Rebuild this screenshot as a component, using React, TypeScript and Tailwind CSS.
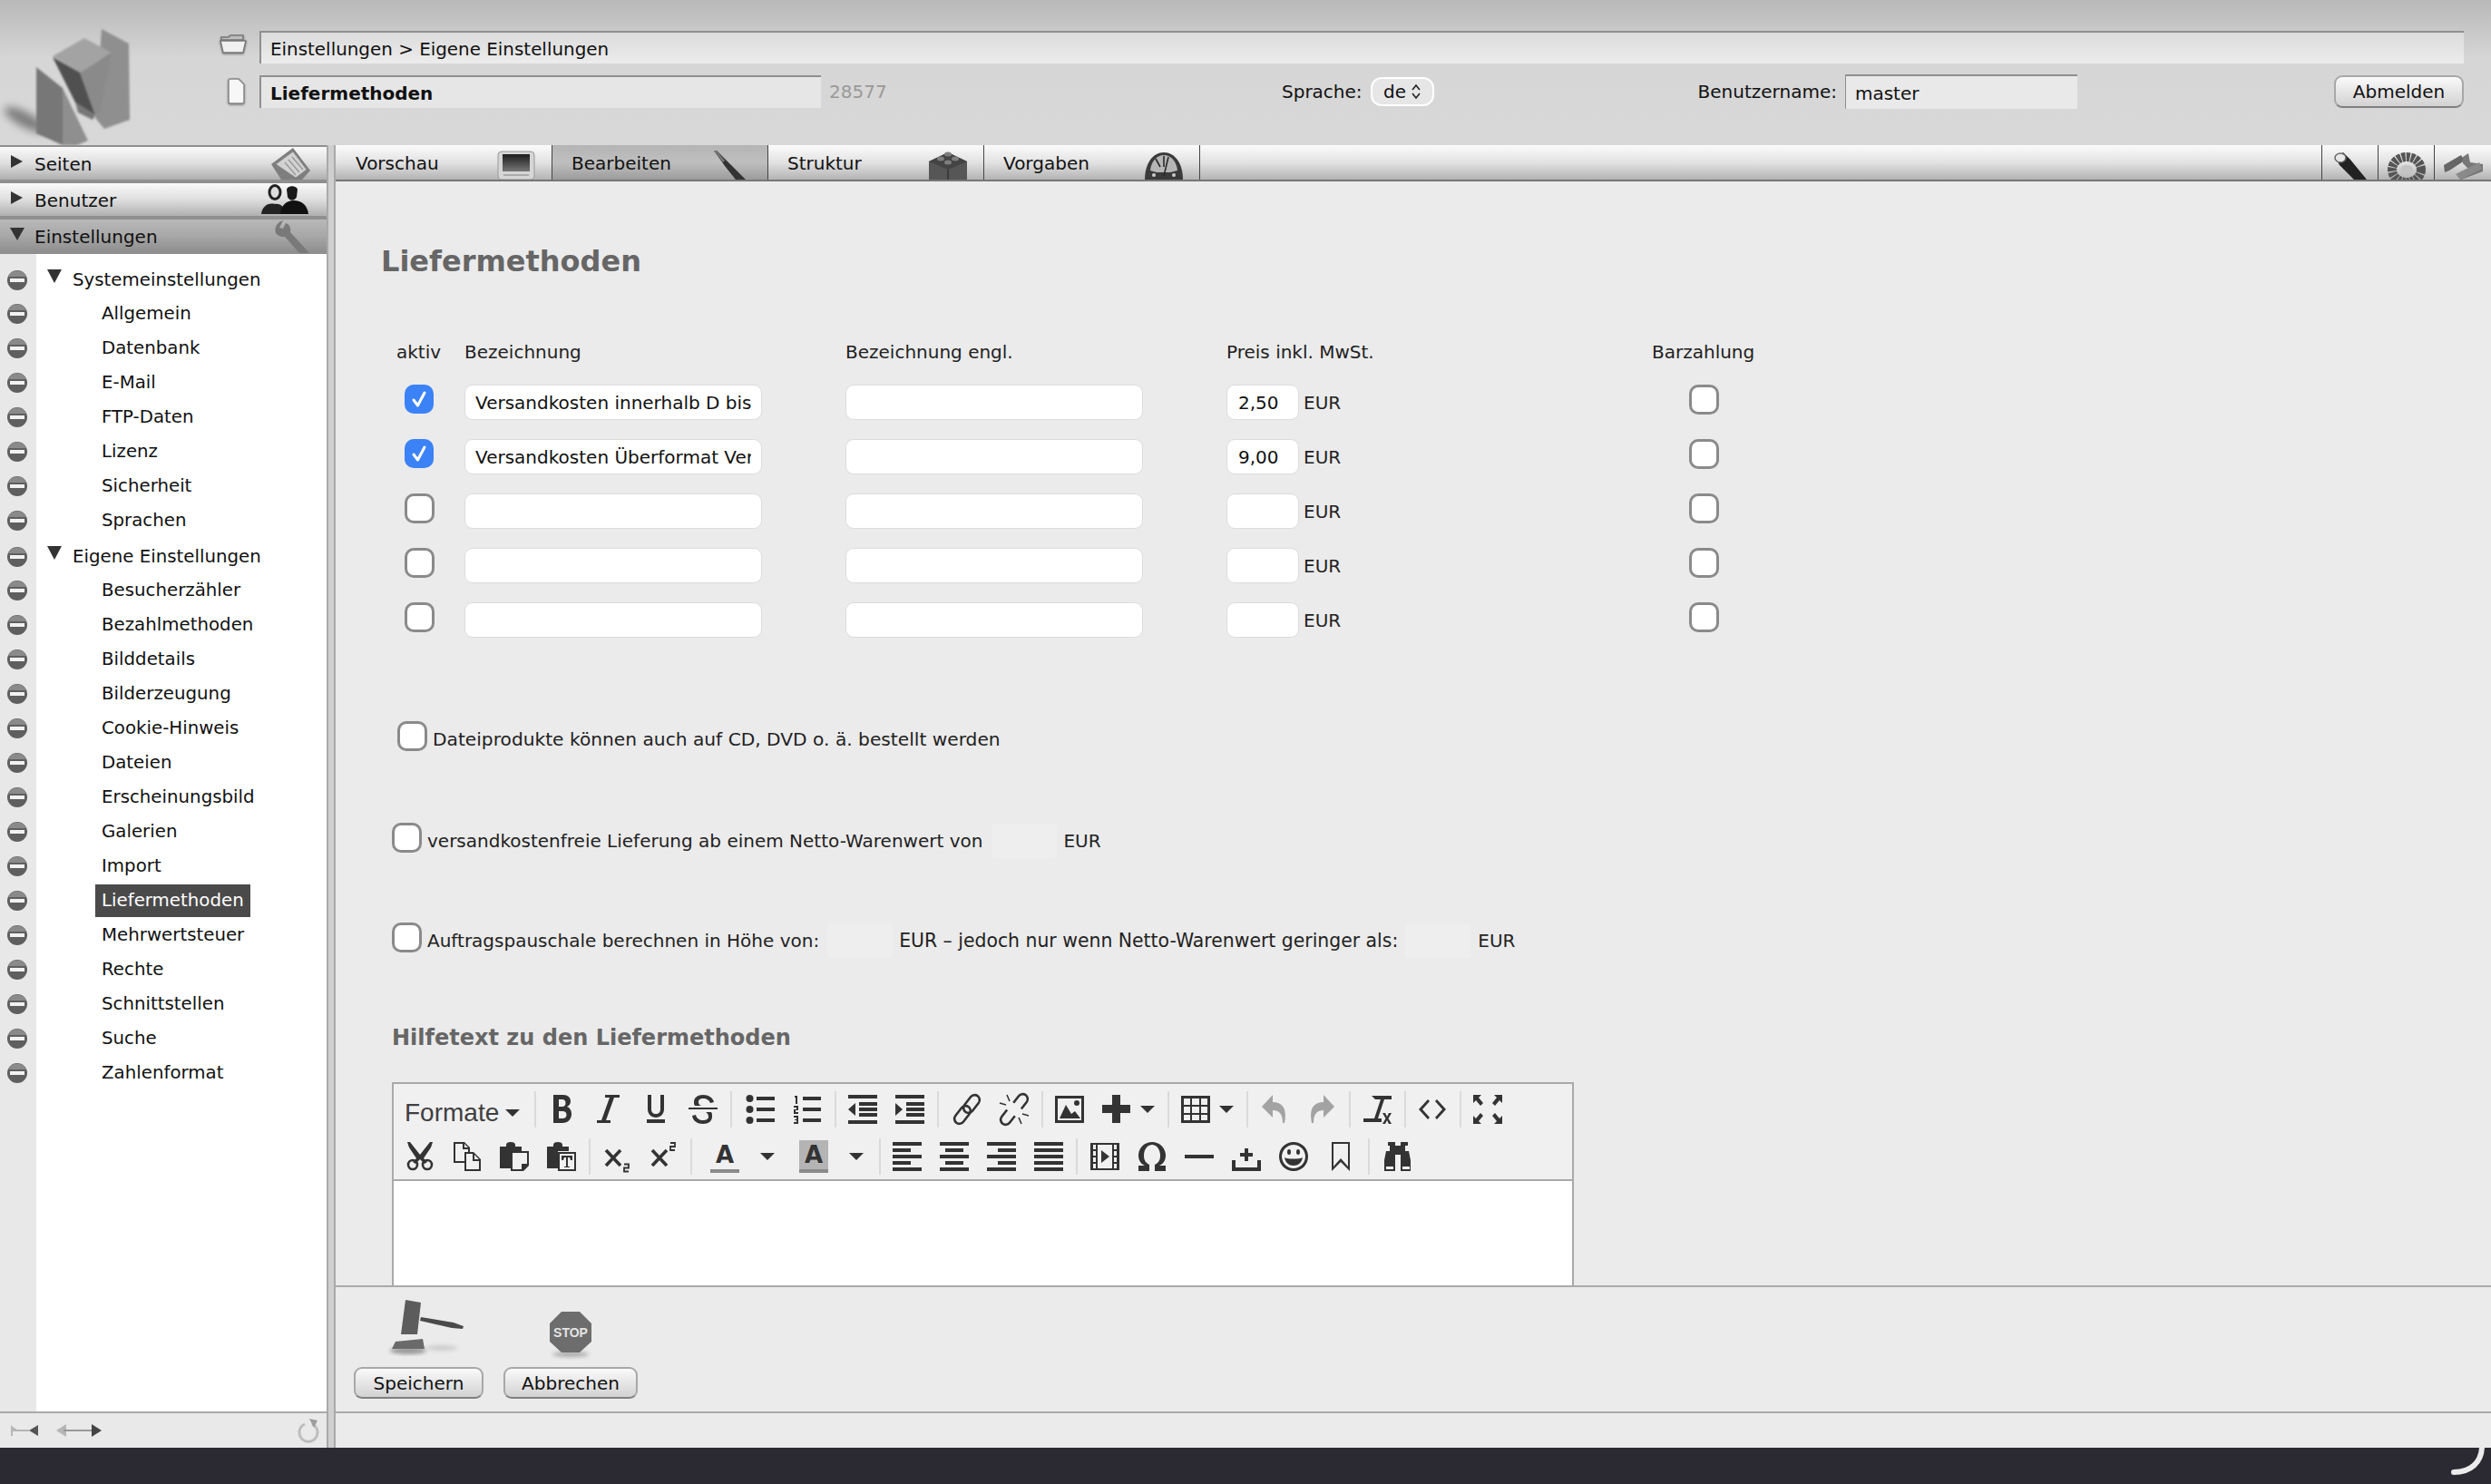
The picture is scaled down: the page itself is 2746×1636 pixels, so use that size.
import React from "react";

const tree = [
  { title: "Systemeinstellungen", items: ["Allgemein", "Datenbank", "E-Mail", "FTP-Daten", "Lizenz", "Sicherheit", "Sprachen"] },
  { title: "Eigene Einstellungen", items: ["Besucherzähler", "Bezahlmethoden", "Bilddetails", "Bilderzeugung", "Cookie-Hinweis", "Dateien", "Erscheinungsbild", "Galerien", "Import", "Liefermethoden", "Mehrwertsteuer", "Rechte", "Schnittstellen", "Suche", "Zahlenformat"] },
];

const rows = [
  { on: true, name: "Versandkosten innerhalb D bis 500g", price: "2,50" },
  { on: true, name: "Versandkosten Überformat Versand", price: "9,00" },
  { on: false, name: "", price: "" },
  { on: false, name: "", price: "" },
  { on: false, name: "", price: "" },
];

function Check({ on = false }: { on?: boolean }) {
  if (on) {
    return (
      <span className="flex h-[32px] w-[32px] shrink-0 items-center justify-center rounded-[10px] bg-[#3b82f6]">
        <svg viewBox="0 0 32 32" className="h-[32px] w-[32px]" fill="none" stroke="white" strokeWidth="3" strokeLinecap="round" strokeLinejoin="round">
          <path d="M10 17l4.5 6L22 9" />
        </svg>
      </span>
    );
  }
  return <span className="block h-[33px] w-[33px] shrink-0 rounded-[10px] border-[3px] border-[#8a8a8a] bg-white" />;
}

function Minus() {
  return (
    <svg viewBox="0 0 24 24" className="h-[24px] w-[24px]" style={{ filter: "blur(0.4px)" }}>
      <circle cx="12" cy="12" r="11" fill="#5f5f5f" />
      <path d="M2 8 a11 11 0 0 1 20 0 z" fill="#8a8a8a" />
      <rect x="4" y="10" width="16" height="4" fill="#f2f2f2" />
    </svg>
  );
}

function Tri({ open = false, className = "" }: { open?: boolean; className?: string }) {
  return (
    <svg viewBox="0 0 16 16" preserveAspectRatio="none" className={className} fill="#333">
      {open ? <path d="M0 0h16L8 16z" /> : <path d="M0 0l16 8-16 8z" />}
    </svg>
  );
}

function BarIcon({ kind }: { kind: string }) {
  const blur = { filter: "blur(0.6px)" };
  if (kind === "seiten")
    return (
      <svg viewBox="0 0 44 36" className="h-[36px] w-[44px]" style={blur}>
        <path d="M25 0L44 25l-9 10H12L1 18z" fill="#7e7e7e" />
        <path d="M25 4L40 24 28 33 6 18z" fill="#d2d2d2" stroke="#888" />
        <path d="M20 13l12 14M16 16l12 14M24 10l12 14" stroke="#9a9a9a" strokeWidth="1.500" />
      </svg>
    );
  if (kind === "benutzer")
    return (
      <svg viewBox="0 0 56 36" className="h-[36px] w-[56px]" style={blur}>
        <ellipse cx="17" cy="9" rx="6" ry="7.500" fill="#ddd" stroke="#222" strokeWidth="3" />
        <path d="M2 33c1-8 7-13 15-11 6-1 11 3 13 11z" fill="#222" />
        <path d="M30 6c1-5 11-5 12 0l-1 8c-2 5-8 5-10 0z" fill="#1a1a1a" />
        <path d="M23 33c1-10 7-15 15-15s15 5 16 15z" fill="#111" />
      </svg>
    );
  return (
    <svg viewBox="0 0 44 36" className="h-[36px] w-[44px]" style={blur}>
      <path d="M14 0c-6 2-10 7-8 14 2 3 7 5 10 4l16 18h11L22 13c1-5-1-9-5-10l-3 6-4-1z" fill="#797979" />
    </svg>
  );
}

function SideBar({ label, kind, open = false }: { label: string; kind: string; open?: boolean }) {
  const bg = open
    ? "bg-gradient-to-b from-[#b8b8b8] via-[#a8a8a8] to-[#8e8e8e]"
    : "bg-gradient-to-b from-[#fafafa] via-[#dedede] to-[#b0b0b0]";
  return (
    <div className={`flex h-[40px] items-center border-y-2 border-y-[#8f8f8f] pt-[2px] text-[20px] text-[#111] ${bg}`}>
      <span className="flex w-[38px] shrink-0 justify-center">
        {open ? <Tri open className="mb-[6px] h-[14px] w-[16px]" /> : <Tri className="mb-[6px] h-[14px] w-[13px] -translate-x-[1px]" />}
      </span>
      <span className="flex-1">{label}</span>
      <span className="flex h-[36px] items-end pr-[18px]"><BarIcon kind={kind} /></span>
    </div>
  );
}

function TabIcon({ kind }: { kind: string }) {
  const blur = { filter: "blur(0.5px)" };
  if (kind === "vorschau")
    return (
      <svg viewBox="0 0 44 32" className="h-[32px] w-[44px]" style={blur}>
        <defs>
          <linearGradient id="screen" x1="0" y1="0" x2="0" y2="1">
            <stop offset="0" stopColor="#1c1c1c" />
            <stop offset="1" stopColor="#777" />
          </linearGradient>
        </defs>
        <rect x="2" y="1" width="40" height="31" rx="4" fill="#d6d6d6" stroke="#999" />
        <rect x="7" y="4" width="30" height="19" fill="url(#screen)" />
        <path d="M8 27h28" stroke="#aaa" strokeWidth="2" />
      </svg>
    );
  if (kind === "bearbeiten")
    return (
      <svg viewBox="0 0 44 32" className="h-[32px] w-[44px]" style={blur}>
        <path d="M2 0l2-1 14 14 19 19H26L14 17z" fill="#333" />
        <path d="M2 0l2-1 10 12-2 2z" fill="#777" />
      </svg>
    );
  if (kind === "struktur")
    return (
      <svg viewBox="0 0 44 32" className="h-[32px] w-[44px]" style={blur}>
        <path d="M1 12L22 2l21 10v20H1z" fill="#565656" />
        <path d="M1 12l21 9 21-9-21-10z" fill="#444" />
        <path d="M22 21v11" stroke="#333" strokeWidth="1.500" />
        <ellipse cx="14" cy="9" rx="4" ry="2.500" fill="#7e7e7e" />
        <ellipse cx="22" cy="4" rx="4" ry="2.500" fill="#7e7e7e" />
        <ellipse cx="30" cy="9" rx="4" ry="2.500" fill="#7e7e7e" />
        <ellipse cx="22" cy="13" rx="4" ry="2.500" fill="#7e7e7e" />
      </svg>
    );
  return (
    <svg viewBox="0 0 44 32" className="h-[32px] w-[44px]" style={blur}>
      <path d="M1 32C1 14 10 2 22 2s21 12 21 30z" fill="#3a3a3a" />
      <path d="M7 22C8 12 14 5 22 5s14 7 15 17l-8 2H14z" fill="#b5b5b5" />
      <path d="M22 28L27 7M22 6v12M13 9l5 9" stroke="#2a2a2a" strokeWidth="1.600" />
      <circle cx="11" cy="27" r="2" fill="#ccc" />
      <circle cx="33" cy="27" r="2" fill="#ccc" />
    </svg>
  );
}

function Tab({ label, kind, active = false }: { label: string; kind: string; active?: boolean }) {
  const bg = active
    ? "bg-gradient-to-b from-[#b4b4b4] via-[#bfbfbf] to-[#9c9c9c]"
    : "bg-gradient-to-b from-[#fbfbfb] via-[#e2e2e2] to-[#b4b4b4]";
  return (
    <div className={`flex h-[38px] w-[238px] items-center justify-between border-r border-r-[#444] pl-[21px] pr-[17px] text-[20px] text-[#111] ${bg}`}>
      <span className="pt-[2px]">{label}</span>
      <span className="flex h-[38px] items-end"><TabIcon kind={kind} /></span>
    </div>
  );
}

function ToolSvg({ children, size = 32 }: { children: React.ReactNode; size?: number }) {
  return (
    <svg viewBox="0 0 32 32" className="overflow-visible text-[#333]" width={size} height={size} fill="currentColor">
      {children}
    </svg>
  );
}

const icons: Record<string, React.ReactNode> = {
  bold: <path fillRule="evenodd" d="M7 0h11c5 0 8 3 8 7 0 3-1.500 5-4 6 3 1 5 4 5 8 0 6-4 10-10 10H7zM13 5v8h4c2 0 3.500-1.500 3.500-4S19 5 17 5zM13 18v8h4c3 0 4.500-1.500 4.500-4S20 18 17 18z" />,
  italic: <path d="M12 0h16v3h-6l-9 25h5v3H3v-3h5l9-25h-5z" />,
  underline: <path d="M7 0h4v16c0 3 2 5 5 5s5-2 5-5V0h4v16c0 5-4 9-9 9s-9-4-9-9zM6 27h20v4H6z" />,
  strike: <path d="M0 14h32v2H0zM24 9c-1-3-4-5-8-5-3 0-5 1-5 4 0 2 1 3 3 4h-7c-1-1-1-3-1-4 0-5 4-8 10-8s11 3 12 8zM8 22c1 4 4 6 8 6 3 0 6-1 6-4 0-2-1-4-3-5h6c1 1 1 3 1 5 0 5-4 8-10 8S5 29 4 23z" />,
  bullist: (
    <>
      <circle cx="4.500" cy="4" r="4" /><circle cx="4.500" cy="16" r="4" /><circle cx="4.500" cy="28" r="4" />
      <rect x="12" y="2" width="20" height="4" /><rect x="12" y="14" width="20" height="4" /><rect x="12" y="26" width="20" height="4" />
    </>
  ),
  numlist: (
    <>
      <path d="M2 1h3v9H3V3H2zM1 12h5v5H3v2h3v2H1v-5h3v-2H1zM1 23h5v9H1v-2h3v-2H2v-1h2v-2H1z" />
      <rect x="11" y="2" width="20" height="4" /><rect x="11" y="14" width="20" height="4" /><rect x="11" y="26" width="20" height="4" />
    </>
  ),
  outdent: <path d="M0 0h32v4H0zM12 8h20v4H12zM12 14h20v4H12zM12 20h20v4H12zM0 28h32v4H0zM8 9v14L0 16z" />,
  indent: <path d="M0 0h32v4H0zM12 8h20v4H12zM12 14h20v4H12zM12 20h20v4H12zM0 28h32v4H0zM0 9v14l8-7z" />,
  left: <path d="M0 0h32v4H0zM0 7h20v4H0zM0 14h32v4H0zM0 21h20v4H0zM0 28h32v4H0z" />,
  center: <path d="M0 0h32v4H0zM6 7h20v4H6zM0 14h32v4H0zM6 21h20v4H6zM0 28h32v4H0z" />,
  right: <path d="M0 0h32v4H0zM12 7h20v4H12zM0 14h32v4H0zM12 21h20v4H12zM0 28h32v4H0z" />,
  justify: <path d="M0 0h32v4H0zM0 7h32v4H0zM0 14h32v4H0zM0 21h32v4H0zM0 28h32v4H0z" />,
  link: (
    <g fill="none" stroke="currentColor" strokeWidth="2.600">
      <rect x="-5.500" y="-11" width="11" height="22" rx="5.500" transform="translate(21 10) rotate(38)" />
      <rect x="-5.500" y="-11" width="11" height="22" rx="5.500" transform="translate(11 22) rotate(38)" />
    </g>
  ),
  unlink: (
    <g fill="none" stroke="currentColor" strokeWidth="2.600">
      <path d="M-5.500 4V-5.500a5.500 5.500 0 0 1 11 0V4" transform="translate(22 9) rotate(38)" />
      <path d="M-5.500 -4V5.500a5.500 5.500 0 0 0 11 0V-4" transform="translate(10 23) rotate(38)" />
      <path d="M8 0l3 7M0 9l7 2M24 32l-3-7M32 23l-7-2" strokeWidth="1.600" />
    </g>
  ),
  image: (
    <>
      <path fillRule="evenodd" d="M0 1h32v30H0zM3 4v24h26V4z" />
      <path d="M5 26l7-15 6 10 4-3 6 8z" />
      <circle cx="24" cy="9" r="3" />
    </>
  ),
  plus: <path d="M11 0h9v11h11v9H20v11h-9V20H0v-9h11z" />,
  table: <path fillRule="evenodd" d="M0 1h32v30H0zM3 4v7h7V4zM12 4v7h8V4zM22 4v7h7V4zM3 13v7h7v-7zM12 13v7h8v-7zM22 13v7h7v-7zM3 22v6h7v-6zM12 22v6h8v-6zM22 22v6h7v-6z" />,
  undo: <path d="M14 0L2 13l12 12v-8c7 0 11 4 11 14h2c3-14-1-23-13-23z" />,
  redo: <path d="M18 0l12 13-12 12v-8C11 17 7 21 7 31H5C2 17 6 8 18 8z" />,
  clear: <path d="M10 1h22v4h-8l-7 21h4v4H1v-4h12l7-21h-6zM22 20h3l2 4 2-4h3l-3.500 6 3.500 6h-3l-2-4-2 4h-3l3.500-6z" />,
  code: <path d="M11 5l2 2-8 9 8 9-2 2L1 16zM21 5l-2 2 8 9-8 9 2 2 10-11z" />,
  full: <path d="M0 0h9l-3 3 5 6-3 3-5-6-3 3zM32 0h-9l3 3-5 6 3 3 5-6 3 3zM0 32h9l-3-3 5-6-3-3-5 6-3-3zM32 32h-9l3-3-5-6 3-3 5 6 3-3z" />,
  cut: (
    <g>
      <path d="M5 0l11 14L27 0h3l-2 6-8 12 4 4-3 2-5-5-5 5-3-2 4-4L4 6 2 0z" />
      <circle cx="8" cy="25" r="5" fill="none" stroke="currentColor" strokeWidth="2.600" />
      <circle cx="24" cy="25" r="5" fill="none" stroke="currentColor" strokeWidth="2.600" />
    </g>
  ),
  copy: <path fillRule="evenodd" d="M1 0h12l6 6v5h4l8 8v13H13v-9H1zM3 2v19h10V11h4V8h-6V2zM15 13v17h14V21h-7v-8zM13 2v4h4zM24 14v5h5z" />,
  paste: (
    <>
      <path d="M0 5h7V3c0-2 2-3 5-3s5 1 5 3v2h7v5H12v19H0z" />
      <path fillRule="evenodd" d="M12 10h20v16l-6 6H12zM14 12v18h10v-6h6V12z" />
    </>
  ),
  pastetext: (
    <>
      <path d="M0 5h7V3c0-2 2-3 5-3s5 1 5 3v2h7v5H12v19H0z" />
      <path fillRule="evenodd" d="M12 11h20v21H12zM14 13v17h16V13z" />
      <path d="M16 15h12v5h-2l-1-3h-2v10h2v1h-6v-1h2V17h-2l-1 3h-2z" />
    </>
  ),
  sub: (
    <g fill="none" stroke="currentColor">
      <path d="M5 9l16 17M21 9L5 26" strokeWidth="3.600" />
      <path d="M25 24.500h5v4h-5v4h5" strokeWidth="1.800" />
    </g>
  ),
  sup: (
    <g fill="none" stroke="currentColor">
      <path d="M4 9l16 17M20 9L4 26" strokeWidth="3.600" />
      <path d="M24 1h5v4h-5v4h5" strokeWidth="1.800" />
    </g>
  ),
  media: (
    <path fillRule="evenodd" d="M0 1h32v30H0zM3 3v5h3V3zM3 10v5h3v-5zM3 17v5h3v-5zM3 24v5h3v-5zM26 3v5h3V3zM26 10v5h3v-5zM26 17v5h3v-5zM26 24v5h3v-5zM8 3v26h16V3zM12 9l9 7-9 7z" />
  ),
  omega: <path d="M1 26v6h12v-7c-4-2-6-5-6-10 0-7 4-12 9-12s9 5 9 12c0 5-2 8-6 10v7h12v-6h-7c5-2 7-7 7-11 0-9-7-15-15-15S1 6 1 15c0 4 2 9 7 11z" />,
  hr: <path d="M0 14h32v4H0z" />,
  pagebreak: <path d="M14 7h4v5h5v4h-5v5h-4v-5H9v-4h5zM0 20h4v8h24v-8h4v12H0z" />,
  smiley: (
    <>
      <path fillRule="evenodd" d="M16 0c9 0 16 7 16 16s-7 16-16 16S0 25 0 16 7 0 16 0zM16 3C9 3 3 9 3 16s6 13 13 13 13-6 13-13S23 3 16 3z" />
      <ellipse cx="11" cy="11" rx="2" ry="3" /><ellipse cx="21" cy="11" rx="2" ry="3" />
      <path d="M6 17c3 2 17 2 20 0-1 6-5 9-10 9s-9-3-10-9z" />
    </>
  ),
  bookmark: <path fillRule="evenodd" d="M6 0h20v32L16 22 6 32zM8 2v25l8-9 8 9V2z" />,
  binoculars: <path d="M5 0h8v4h6V0h8v4h-3v6h4l2 10v12H19V14h-6v18H1V20l2-10h4V4H5zM3 27v3h8v-3zM21 27v3h8v-3z" />,
};

function Btn({ icon, muted = false, className = "" }: { icon: string; muted?: boolean; className?: string }) {
  return (
    <div className={`flex h-[38px] w-[52px] shrink-0 items-center justify-center ${muted ? "opacity-40" : ""} ${className}`}>
      <ToolSvg>{icons[icon]}</ToolSvg>
    </div>
  );
}

function Sep() {
  return <div className="ml-[4px] mr-[3px] h-[40px] w-[2px] shrink-0 bg-[#dadada]" />;
}

function Caret() {
  return <span className="block h-0 w-0 border-x-[8px] border-t-[8px] border-x-transparent border-t-[#333]" />;
}

function SplitBtn({ icon }: { icon: string }) {
  return (
    <div className="flex h-[38px] w-[78px] shrink-0 items-center">
      <Btn icon={icon} />
      <Caret />
    </div>
  );
}

function ColorBtn({ back = false, className = "" }: { back?: boolean; className?: string }) {
  return (
    <div className={`flex h-[38px] w-[98px] shrink-0 items-center ${className}`}>
      <div className="flex w-[52px] justify-center">
        <div className={`relative flex h-[36px] w-[32px] items-center justify-center ${back ? "bg-[#b4b4b4]" : ""}`}>
          <span className="-mt-[4px] text-[26px] font-bold leading-none text-[#333]">A</span>
          <span className="absolute bottom-0 left-0 h-[4px] w-[32px] bg-[#8a8a8a]" />
        </div>
      </div>
      <span className="ml-[13px]"><Caret /></span>
    </div>
  );
}

function Toolbar() {
  return (
    <div className="border-b-2 border-b-[#a9a9a9] bg-[#f0f0f0] pb-[5px] pl-[3px] pt-[8px]">
      <div className="flex h-[40px] items-center">
        <div className="mt-[8px] flex w-[148px] shrink-0 items-center pl-[9px] text-[28px] text-[#404040] [font-family:'Liberation_Sans',sans-serif]">
          <span>Formate</span>
          <span className="ml-[7px]"><Caret /></span>
        </div>
        <Sep />
        <Btn icon="bold" className="-ml-[1px]" /><Btn icon="italic" /><Btn icon="underline" /><Btn icon="strike" />
        <Sep />
        <Btn icon="bullist" className="ml-[2px]" /><Btn icon="numlist" />
        <Sep />
        <Btn icon="outdent" /><Btn icon="indent" />
        <Sep />
        <Btn icon="link" className="ml-[2px]" /><Btn icon="unlink" />
        <Sep />
        <Btn icon="image" /><SplitBtn icon="plus" />
        <Sep />
        <SplitBtn icon="table" />
        <Sep />
        <Btn icon="undo" muted /><Btn icon="redo" muted />
        <Sep />
        <Btn icon="clear" />
        <Sep />
        <Btn icon="code" />
        <Sep />
        <Btn icon="full" />
      </div>
      <div className="mt-[12px] flex h-[40px] items-center">
        <Btn icon="cut" /><Btn icon="copy" /><Btn icon="paste" /><Btn icon="pastetext" />
        <Sep />
        <Btn icon="sub" className="-ml-[1px]" /><Btn icon="sup" />
        <Sep />
        <ColorBtn className="ml-[7px]" /><ColorBtn back className="-mr-[4px]" />
        <Sep />
        <Btn icon="left" /><Btn icon="center" /><Btn icon="right" /><Btn icon="justify" />
        <Sep />
        <Btn icon="media" className="ml-[1px]" /><Btn icon="omega" /><Btn icon="hr" /><Btn icon="pagebreak" /><Btn icon="smiley" /><Btn icon="bookmark" />
        <Sep />
        <Btn icon="binoculars" className="ml-[2px]" />
      </div>
    </div>
  );
}

function GrayField({ className = "" }: { className?: string }) {
  return <span className={`block h-[38px] w-[72px] shrink-0 rounded-[4px] bg-[#eeeeee] ${className}`} />;
}

function TextBox({ value = "", w }: { value?: string; w: string }) {
  return (
    <input
      readOnly
      value={value}
      className={`h-[39px] shrink-0 rounded-[9px] border border-[#dcdcdc] bg-white px-[11px] text-[20px] text-[#111] outline-none ${w}`}
    />
  );
}

function PushButton({ label, w }: { label: string; w: string }) {
  return (
    <button className={`flex h-[35px] items-center justify-center rounded-[9px] border-2 border-[#a8a8a8] border-b-[#7f7f7f] bg-gradient-to-b from-[#fafafa] to-[#d2d2d2] text-[20px] text-[#111] ${w}`}>
      {label}
    </button>
  );
}

function Logo() {
  return (
    <svg viewBox="0 0 150 160" className="h-[160px] w-[150px]">
      <ellipse cx="28" cy="132" rx="26" ry="8" fill="#7c7c7c" transform="rotate(28 28 132)" style={{ filter: "blur(5px)" }} />
      <g style={{ filter: "blur(0.8px)" }}>
        <path d="M112 32l30 16 1 84-28 10-10-12z" fill="#8f8f8f" />
        <path d="M58 62l35-20 30 16-35 22z" fill="#a3a3a3" />
        <path d="M88 80l35-22-13 67-5 2z" fill="#8a8a8a" />
        <path d="M58 63l30 17 17 47-22-14z" fill="#505050" />
        <path d="M83 113l22 14-3 5-16-8z" fill="#777" />
        <path d="M40 74l29 23v63l-29-13z" fill="#777" />
        <path d="M69 97l28 58-12 5H69z" fill="#8f8f8f" />
      </g>
    </svg>
  );
}

function Folder() {
  return (
    <svg viewBox="0 0 30 22" className="h-[22px] w-[30px]" style={{ filter: "drop-shadow(0 1px 1px #777)" }}>
      <path d="M2 6V3h8l2-2h14v5z" fill="#bdbdbd" stroke="#777" strokeWidth="1.500" />
      <path d="M1 7h28l-3 13H4z" fill="#f0f0f0" stroke="#777" strokeWidth="1.500" strokeLinejoin="round" />
    </svg>
  );
}

function Page() {
  return (
    <svg viewBox="0 0 20 30" className="h-[30px] w-[20px]" style={{ filter: "drop-shadow(0 1px 1px #777)" }}>
      <path d="M3 1h9l6 6v19a2 2 0 0 1-2 2H3a2 2 0 0 1-2-2V3a2 2 0 0 1 2-2z" fill="#f7f7f7" stroke="#888" strokeWidth="1.500" />
    </svg>
  );
}

function Gavel() {
  return (
    <svg viewBox="0 0 92 62" className="h-[62px] w-[92px]">
      <ellipse cx="25" cy="56" rx="20" ry="4" fill="#999" style={{ filter: "blur(2px)" }} />
      <ellipse cx="62" cy="53" rx="17" ry="3" fill="#ccc" style={{ filter: "blur(2px)" }} />
      <path d="M7 54l4-8 30-3 2 11z" fill="#6a6a6a" />
      <path d="M22 0l17 3-4 35H17z" fill="#5c5c5c" />
      <path d="M39 19l36 6 11 4-1 3-12-1-35-8z" fill="#4a4a4a" />
    </svg>
  );
}

function StopSign() {
  return (
    <svg viewBox="0 0 48 52" className="h-[52px] w-[48px] overflow-visible">
      <ellipse cx="24" cy="48" rx="20" ry="3" fill="#aaa" style={{ filter: "blur(2px)" }} />
      <path d="M14 1h20l13 13v20L34 46H14L1 34V14z" fill="#6d6d6d" />
      <text x="24" y="29" textAnchor="middle" fontSize="14" fontWeight="bold" fill="#e4e4e4" fontFamily="Liberation Sans">STOP</text>
    </svg>
  );
}

export default function App() {
  return (
    <div className="flex h-[1636px] w-[2746px] flex-col overflow-hidden bg-[#2b2a33] text-[20px] [font-family:'DejaVu_Sans',sans-serif]">
      <header className="flex h-[160px] shrink-0 bg-gradient-to-b from-[#b8b8b8] via-[#d6d6d6] via-40% to-[#d8d8d8]">
        <div className="w-[240px] shrink-0"><Logo /></div>
        <div className="flex-1 pr-[30px] pt-[34px]">
          <div className="flex h-[36px] items-center">
            <span className="mr-[13px] flex h-[36px] w-[33px] justify-center pt-[4px]"><Folder /></span>
            <div className="flex h-[36px] flex-1 items-center border-l-2 border-t-2 border-[#8f8f8f] bg-gradient-to-b from-[#dcdcdc] to-[#ececec] pl-[10px] pt-[3px] text-[19.900px] text-[#111]">
              Einstellungen &gt; Eigene Einstellungen
            </div>
          </div>
          <div className="mt-[13px] flex h-[36px] items-center">
            <span className="mr-[13px] flex w-[33px] justify-center pl-[8px]"><Page /></span>
            <div className="flex h-[36px] w-[619px] items-center border-l-2 border-t-2 border-[#8f8f8f] bg-[#e6e6e6] pl-[10px] pt-[2px] text-[20px] font-bold text-[#111]">
              Liefermethoden
            </div>
            <span className="ml-[9px] w-[499px] text-[20px] text-[#999]">28577</span>
            <span className="text-[20px] text-[#111]">Sprache:</span>
            <span className="ml-[9px] flex h-[32px] w-[70px] items-center justify-center gap-[6px] rounded-[12px] border-2 border-white bg-[#e6e6e6] text-[20px] text-[#111]">
              de
              <svg viewBox="0 0 10 18" className="h-[18px] w-[10px]" fill="none" stroke="#222" strokeWidth="1.600"><path d="M1 7l4-5 4 5M1 11l4 5 4-5" /></svg>
            </span>
            <span className="ml-[291px] text-[20px] text-[#111]">Benutzername:</span>
            <span className="ml-[9px] flex h-[38px] w-[256px] items-center border-l border-t-2 border-[#8f8f8f] bg-[#e9e9e9] pl-[10px] pt-[2px] text-[20px] text-[#111]">master</span>
            <span className="flex-1" />
            <button className="flex h-[36px] w-[143px] items-center justify-center rounded-[9px] border-2 border-[#a8a8a8] border-b-[#7f7f7f] bg-gradient-to-b from-[#fafafa] to-[#d2d2d2] text-[20px] text-[#111]">Abmelden</button>
          </div>
        </div>
      </header>

      <div className="flex h-[1436px] shrink-0 bg-[#ebebeb]">
        <aside className="flex w-[360px] shrink-0 flex-col">
          <SideBar label="Seiten" kind="seiten" />
          <SideBar label="Benutzer" kind="benutzer" />
          <SideBar label="Einstellungen" kind="einstellungen" open />
          <div className="flex-1 overflow-hidden bg-[linear-gradient(to_right,#e8e8e8_40px,#ffffff_40px)] pt-[8px]">
            {tree.map((group) => (
              <div key={group.title}>
                <div className="mt-[3px] flex h-[36px] items-center text-[19.800px] text-[#111]">
                  <span className="flex w-[40px] justify-center pr-[2px]"><Minus /></span>
                  <Tri open className="mb-[10px] ml-[12px] h-[15px] w-[16px]" />
                  <span className="ml-[12px]">{group.title}</span>
                </div>
                {group.items.map((item) => (
                  <div key={item} className="flex h-[38px] items-center text-[19.800px] text-[#111]">
                    <span className="flex w-[40px] justify-center pr-[2px]"><Minus /></span>
                    {item === "Liefermethoden" ? (
                      <span className="ml-[65px] bg-[#4a4a4a] px-[7px] py-[3px] text-white">{item}</span>
                    ) : (
                      <span className="ml-[72px]">{item}</span>
                    )}
                  </div>
                ))}
              </div>
            ))}
          </div>
          <div className="flex h-[40px] shrink-0 items-center border-t-2 border-t-[#a9a9a9] bg-[#e9e9e9] pl-[12px] pr-[8px]">
            <svg viewBox="0 0 32 16" className="h-[16px] w-[32px]"><path d="M0 2v12h2V9h8l-8-5z" fill="#b5b5b5" /><path d="M2 7h18v2H2z" fill="#b5b5b5" /><path d="M30 2v12l-10-6z" fill="#555" /></svg>
            <svg viewBox="0 0 50 16" className="ml-[18px] h-[16px] w-[50px]"><path d="M0 8l11-7v14z" fill="#b5b5b5" /><path d="M8 7h32v2H8z" fill="#999" /><path d="M50 8L39 1v14z" fill="#444" /></svg>
            <span className="flex-1" />
            <svg viewBox="0 0 26 28" className="h-[28px] w-[26px]" fill="none" stroke="#bdbdbd" strokeWidth="3"><path d="M10 7a10 10 0 1 0 8 0" /><path d="M15 1l9 2-4 8z" fill="#9c9c9c" stroke="none" /></svg>
          </div>
        </aside>

        <div className="w-[10px] shrink-0 border-x-2 border-x-[#a9a9a9] bg-[#cfcfcf]" />

        <main className="flex min-w-0 flex-1 flex-col">
          <div className="flex h-[40px] shrink-0 border-b-2 border-b-[#777] bg-gradient-to-b from-[#fbfbfb] via-[#e2e2e2] to-[#b4b4b4] pl-[1px]">
            <Tab label="Vorschau" kind="vorschau" />
            <Tab label="Bearbeiten" kind="bearbeiten" active />
            <Tab label="Struktur" kind="struktur" />
            <Tab label="Vorgaben" kind="vorgaben" />
            <span className="flex-1" />
            <div className="flex h-[38px] w-[62px] items-end justify-center border-l border-l-[#444]">
              <svg viewBox="0 0 40 30" className="h-[30px] w-[40px]" style={{ filter: "blur(0.6px)" }}>
                <path d="M4 6l8-6 8 8 18 22H24L8 14z" fill="#222" />
                <ellipse cx="9" cy="6" rx="6" ry="5" fill="#e8e8e8" stroke="#666" strokeWidth="1.500" />
              </svg>
            </div>
            <div className="flex h-[38px] w-[62px] items-end justify-center border-l border-l-[#444]">
              <svg viewBox="0 0 42 30" className="h-[30px] w-[42px]" style={{ filter: "blur(0.5px)" }}>
                <ellipse cx="21" cy="19" rx="16" ry="14" fill="none" stroke="#555" strokeWidth="10" strokeDasharray="4 1" />
                <ellipse cx="21" cy="19" rx="7" ry="5" fill="#c4c4c4" />
              </svg>
            </div>
            <div className="flex h-[38px] w-[63px] items-end justify-center border-l border-l-[#444]">
              <svg viewBox="0 0 44 30" className="h-[30px] w-[44px]" style={{ filter: "blur(0.6px)" }}>
                <path d="M1 14L20 3l4 6-17 11-5 2z" fill="#666" />
                <path d="M22 5l6-4 2 10 14 2v8L20 30l-4-4 12-8-6-6z" fill="#777" />
                <path d="M14 24l26-13 3 7-24 12z" fill="#8a8a8a" />
              </svg>
            </div>
          </div>

          <div className="min-h-0 flex-1 overflow-hidden">
            <div className="pl-[50px] pt-[68px]">
              <h1 className="text-[32px] font-bold leading-[40px] text-[#666]">Liefermethoden</h1>
            </div>

            <div className="mt-[65px] pl-[67px] pr-[40px]">
              <div className="flex h-[30px] items-center text-[#222]">
                <span className="w-[75px]">aktiv</span>
                <span className="w-[420px]">Bezeichnung</span>
                <span className="w-[420px]">Bezeichnung engl.</span>
                <span className="w-[469px]">Preis inkl. MwSt.</span>
                <span>Barzahlung</span>
              </div>
              <div className="mt-[21px] flex flex-col gap-[21px]">
                {rows.map((row, i) => (
                  <div key={i} className="flex h-[39px] items-start">
                    <span className="ml-[9px] w-[66px] shrink-0"><Check on={row.on} /></span>
                    <TextBox value={row.name} w="w-[328px]" />
                    <span className="w-[92px] shrink-0" />
                    <TextBox w="w-[328px]" />
                    <span className="w-[92px] shrink-0" />
                    <div className="flex h-[39px] w-[80px] shrink-0 items-center rounded-[9px] border border-[#dcdcdc] bg-white pl-[12px] text-[#111]">{row.price}</div>
                    <span className="ml-[5px] flex h-[39px] w-[425px] shrink-0 items-center text-[#222]">EUR</span>
                    <Check />
                  </div>
                ))}
              </div>
            </div>

            <div className="ml-[68px] mt-[94px] flex h-[36px] items-center text-[20.200px] text-[#222]">
              <span className="-mt-[8px] mr-[6px]"><Check /></span>
              Dateiprodukte können auch auf CD, DVD o. ä. bestellt werden
            </div>
            <div className="ml-[62px] mt-[76px] flex h-[36px] items-center text-[#222]">
              <span className="-mt-[8px] mr-[6px]"><Check /></span>
              versandkostenfreie Lieferung ab einem Netto-Warenwert von
              <GrayField className="ml-[10px] mr-[7px]" />
              EUR
            </div>
            <div className="ml-[62px] mt-[74px] flex h-[36px] items-center text-[#222]">
              <span className="-mt-[8px] mr-[6px]"><Check /></span>
              Auftragspauschale berechnen in Höhe von:
              <GrayField className="ml-[9px] mr-[7px]" />
              <span className="text-[20.400px]">EUR – jedoch nur wenn Netto-Warenwert geringer als:</span>
              <GrayField className="ml-[8px] mr-[8px]" />
              EUR
            </div>

            <h2 className="ml-[62px] mt-[74px] text-[24px] font-bold leading-[30px] text-[#666]">Hilfetext zu den Liefermethoden</h2>

            <div className="ml-[62px] mt-[34px] h-[400px] w-[1303px] border-2 border-[#a9a9a9] bg-white">
              <Toolbar />
            </div>
          </div>

          <div className="flex h-[139px] shrink-0 gap-[22px] border-t-2 border-t-[#a9a9a9] pl-[20px] pt-[14px]">
            <div className="flex flex-col items-center">
              <div className="ml-[18px] flex h-[74px] items-start"><Gavel /></div>
              <PushButton label="Speichern" w="w-[143px]" />
            </div>
            <div className="flex flex-col items-center">
              <div className="flex h-[74px] items-end pb-[10px]"><StopSign /></div>
              <PushButton label="Abbrechen" w="w-[148px]" />
            </div>
          </div>
          <div className="h-[40px] shrink-0 border-t-2 border-t-[#a9a9a9]" />
        </main>
      </div>

      <div className="relative flex-1 overflow-hidden rounded-b-[12px]">
        <svg viewBox="0 0 40 36" className="absolute right-[6px] top-0 h-[36px] w-[40px]" fill="none" stroke="#ebebeb" strokeWidth="6" strokeLinecap="round">
          <path d="M36 0c-1 16-12 27-31 27" />
        </svg>
      </div>
    </div>
  );
}
